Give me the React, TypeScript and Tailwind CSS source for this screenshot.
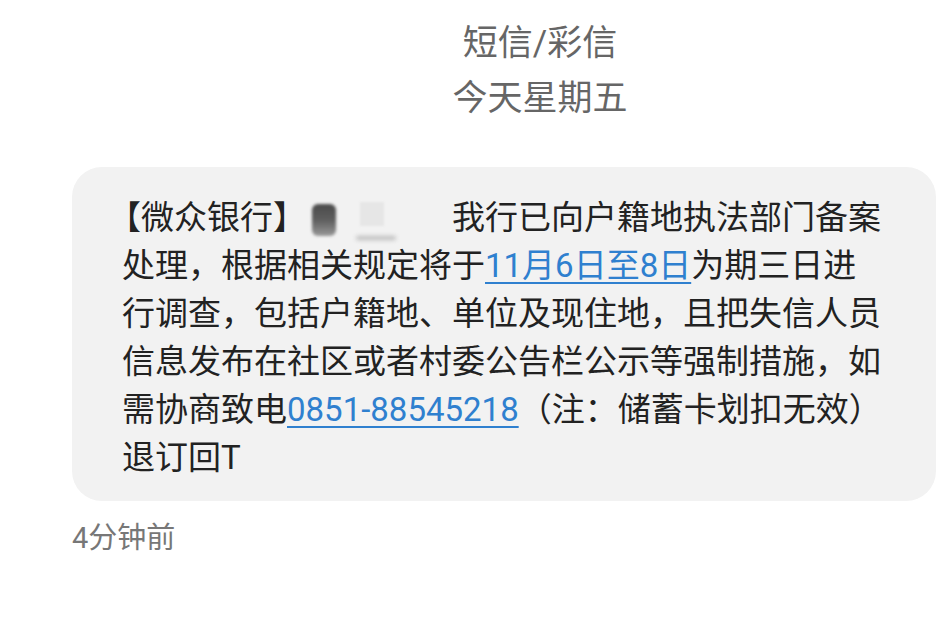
import React from 'react'

const font = { fontFamily: 'Roboto, "Noto Sans CJK SC", "Noto Sans", sans-serif' }

function Link({ children }: { children: React.ReactNode }) {
  return <span className="text-[#2f80cf] underline decoration-[2px] underline-offset-[5px]">{children}</span>
}

export default function App() {
  return (
    <div className="w-[948px] h-[634px] bg-white overflow-hidden" style={font}>
      <div className="flex flex-col items-center pt-[16px] pl-[132px] text-[#666] text-[35px] leading-[55px]">
        <div>短信/彩信</div>
        <div>今天星期五</div>
      </div>

      <div className="mt-[41px] ml-[72px] w-[864px] h-[334px] rounded-[30px] bg-[#f2f2f2] pl-[50px] pt-[27px] text-[#222] text-[33px] leading-[48px]">
        <div className="flex items-center">
          <span className="-ml-[14px]">【微众银行】</span>
          <span className="relative w-[146px] h-[48px] flex items-center">
            <span className="absolute left-[6px] top-[10px] w-[24px] h-[32px] rounded-[6px] bg-gradient-to-b from-[#4a4a4a] via-[#5e5e5e] to-[#999] blur-[1.5px]" />
            <span className="absolute left-[54px] top-[8px] w-[24px] h-[24px] bg-[#e6e6e6] blur-[1px]" />
            <span className="absolute left-[50px] top-[42px] w-[40px] h-[4px] rounded-full bg-[#bbb] blur-[2px]" />
          </span>
          <span>我行已向户籍地执法部门备案</span>
        </div>
        <div>
          处理，根据相关规定将于<Link>11月6日至8日</Link>为期三日进
        </div>
        <div>行调查，包括户籍地、单位及现住地，且把失信人员</div>
        <div>信息发布在社区或者村委公告栏公示等强制措施，如</div>
        <div>
          需协商致电<Link>0851-88545218</Link>（注：储蓄卡划扣无效）
        </div>
        <div>退订回T</div>
      </div>

      <div className="ml-[72px] mt-[16px] text-[#777] text-[29px] leading-[42px]">4分钟前</div>
    </div>
  )
}
